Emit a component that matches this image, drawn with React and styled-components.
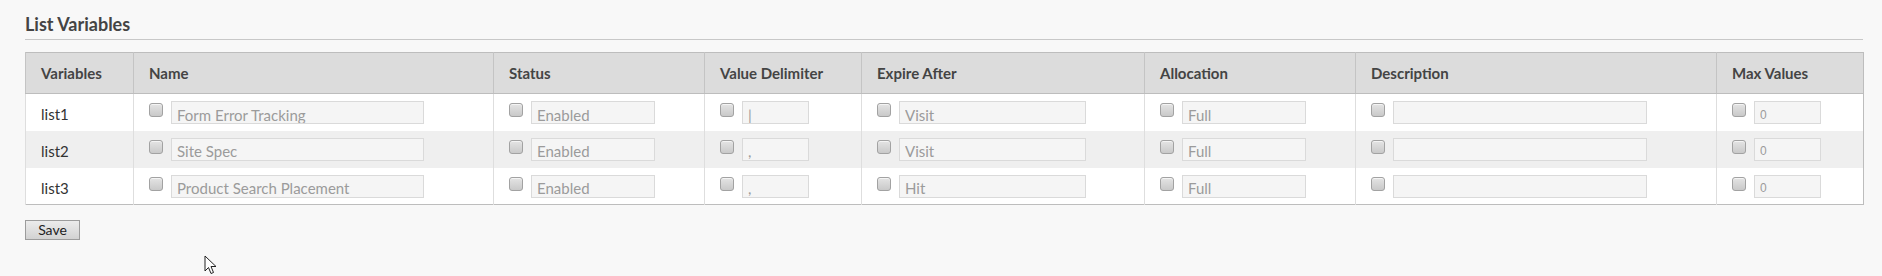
import React from 'react';
import styled, { createGlobalStyle } from 'styled-components';

const GlobalStyle = createGlobalStyle`
  html, body {
    margin: 0;
    padding: 0;
    background: #f8f8f8;
  }
  body {
    font-family: Lato, "Liberation Sans", sans-serif;
    color: #333;
  }
`;

const Page = styled.div`
  position: relative;
  width: 1882px;
  height: 276px;
  padding: 13px 19px 0 25px;
  box-sizing: border-box;
`;

const Title = styled.h2`
  margin: 0;
  font-size: 18px;
  font-weight: 700;
  color: #444;
  line-height: 22px;
  padding-bottom: 4px;
  border-bottom: 1px solid #c8c8c8;
`;

const Table = styled.table`
  margin-top: 12px;
  width: 1838px;
  border-collapse: collapse;
  table-layout: fixed;
  border: 1px solid #bdbdbd;
  background: #fff;
`;

const HeadCell = styled.th`
  height: 41px;
  padding: 0 15px;
  box-sizing: border-box;
  text-align: left;
  font-size: 15px;
  font-weight: 700;
  color: #444;
  background: #dcdcdc;
  border-left: 1px solid #c4c4c4;
  border-bottom: 1px solid #bdbdbd;
`;

const Row = styled.tr`
  background: ${(p) => (p.$alt ? '#efefef' : '#fff')};
`;

const Cell = styled.td`
  height: 37px;
  padding: 0 15px;
  box-sizing: border-box;
  vertical-align: top;
  border-left: 1px solid #dedede;
  font-size: 15px;
  color: #333;
`;

const VarName = styled.div`
  padding-top: 12px;
  line-height: 16px;
`;

const Field = styled.div`
  display: flex;
  align-items: flex-start;
  gap: 8px;
  padding-top: 7px;
`;

const Check = styled.input.attrs({ type: 'checkbox' })`
  appearance: none;
  margin: 2px 0 0;
  width: 14px;
  height: 14px;
  box-sizing: border-box;
  border: 1px solid #a2a2a2;
  border-radius: 3px;
  background: linear-gradient(#e4e4e4, #c9c9c9);
  box-shadow: inset 0 1px 0 #f4f4f4;
`;

const TextBox = styled.input.attrs({ type: 'text', readOnly: true })`
  width: ${(p) => p.$w}px;
  height: 23px;
  box-sizing: border-box;
  margin: 0;
  padding: 4px 5px 0;
  border: 1px solid #dadada;
  background: #f5f5f5;
  font-family: ${(p) => (p.$small ? '"Liberation Sans", Arial' : 'Lato, "Liberation Sans"')}, sans-serif;
  font-size: ${(p) => (p.$small ? 12 : 15)}px;
  color: #9b9b9b;
  outline: none;
`;

const SaveButton = styled.button`
  margin-top: 15px;
  width: 55px;
  height: 20px;
  padding: 0;
  border: 1px solid #9c9c9c;
  background: linear-gradient(#ececec, #d2d2d2);
  font-family: Lato, "Liberation Sans", sans-serif;
  font-size: 14px;
  color: #222;
  line-height: 18px;
`;

const Cursor = styled.svg`
  position: absolute;
  left: 204px;
  top: 255px;
`;

const columns = [
  { title: 'Variables', width: 108 },
  { title: 'Name', width: 360, box: 253 },
  { title: 'Status', width: 211, box: 124 },
  { title: 'Value Delimiter', width: 157, box: 67 },
  { title: 'Expire After', width: 283, box: 187 },
  { title: 'Allocation', width: 211, box: 124 },
  { title: 'Description', width: 361, box: 254 },
  { title: 'Max Values', width: 147, box: 67, small: true },
];

const rows = [
  ['list1', 'Form Error Tracking', 'Enabled', '|', 'Visit', 'Full', '', '0'],
  ['list2', 'Site Spec', 'Enabled', ',', 'Visit', 'Full', '', '0'],
  ['list3', 'Product Search Placement', 'Enabled', ',', 'Hit', 'Full', '', '0'],
];

export default function App() {
  return (
    <Page>
      <GlobalStyle />
      <Title>List Variables</Title>
      <Table>
        <colgroup>
          {columns.map((c) => (
            <col key={c.title} width={c.width} />
          ))}
        </colgroup>
        <thead>
          <tr>
            {columns.map((c) => (
              <HeadCell key={c.title}>{c.title}</HeadCell>
            ))}
          </tr>
        </thead>
        <tbody>
          {rows.map((r, i) => (
            <Row key={r[0]} $alt={i === 1}>
              <Cell>
                <VarName>{r[0]}</VarName>
              </Cell>
              {r.slice(1).map((v, j) => {
                const col = columns[j + 1];
                return (
                  <Cell key={col.title}>
                    <Field>
                      <Check />
                      <TextBox $w={col.box} $small={col.small} value={v} />
                    </Field>
                  </Cell>
                );
              })}
            </Row>
          ))}
        </tbody>
      </Table>
      <SaveButton>Save</SaveButton>
      <Cursor width="13" height="20" viewBox="0 0 13 20">
        <path
          d="M1 1 L1 16 L4.5 12.5 L7 18.5 L9.5 17.5 L7 11.5 L12 11.5 Z"
          fill="#fff"
          stroke="#222"
          strokeWidth="1"
          strokeLinejoin="round"
        />
      </Cursor>
    </Page>
  );
}
